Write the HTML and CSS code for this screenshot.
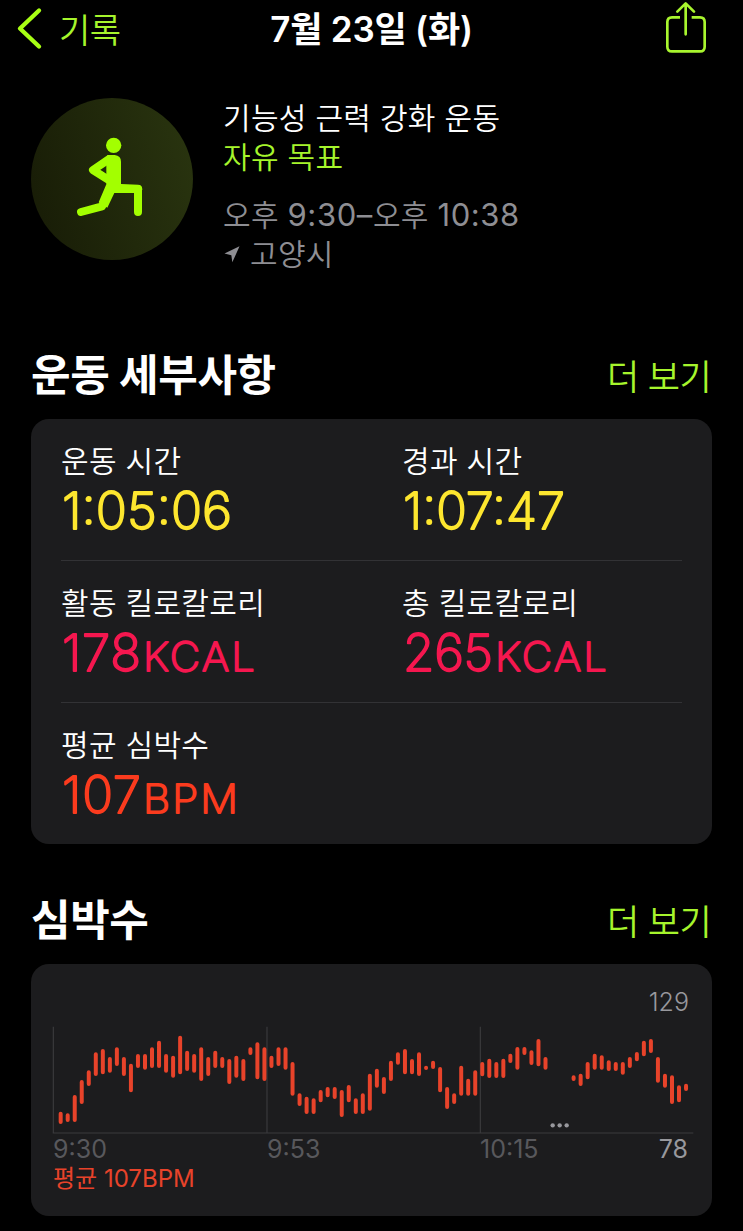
FILE: index.html
```html
<!DOCTYPE html>
<html lang="ko">
<head>
  <meta charset="UTF-8" />
  <meta name="viewport" content="width=device-width, initial-scale=1" />
  <title>7월 23일 (화)</title>
  <link rel="stylesheet" href="styles.css">
</head>
<body>
  <header class="navbar">
    <a class="back">
      <svg class="back-icon" viewBox="48 20 84 134">
        <path d="M117 33L60 87L117 141" />
      </svg>
      <span>기록</span>
    </a>
    <h1 class="navbar-title">7월 23일 (화)</h1>
    <svg class="share-icon" viewBox="879 0 132 165">
      <path d="M927 52H903Q889 52 889 66V140Q889 154 903 154H987Q1001 154 1001 140V66Q1001 52 987 52H962" />
      <path d="M944 103V11M919 35L944 10L969 35" />
    </svg>
  </header>

  <section class="summary">
    <div class="badge">
      <svg class="badge-icon" viewBox="33 39 486 486">
        <circle cx="281" cy="181" r="23" />
        <path class="torso" d="M262 210H284Q303 212 303 230V297L355 300Q367 302 367 314L355 324H283L262 368L236 352L259 298V240Z" />
        <path class="limb" d="M266 223L219 255L268 286M276 311H354V381M272 304L246 364L183 381" />
      </svg>
    </div>
    <div class="summary-text">
      <div class="workout-name">기능성 근력 강화 운동</div>
      <div class="workout-goal">자유 목표</div>
      <div class="workout-time">오후 <span class="clock">9:30–</span>오후 <span class="clock">10:38</span></div>
      <div class="workout-place">
        <svg class="place-icon" viewBox="0 0 48 52"><path d="M47 1L25 50L22 28L1 23Z" /></svg>
        <span>고양시</span>
      </div>
    </div>
  </section>

  <section class="section details">
    <div class="section-header">
      <h2>운동 세부사항</h2>
      <a class="more">더 보기</a>
    </div>
    <div class="card">
      <div class="row">
        <div class="metric time">
          <div class="label">운동 시간</div>
          <svg class="value"><text x="1" y="46" textLength="170" lengthAdjust="spacingAndGlyphs">1:05:06</text></svg>
        </div>
        <div class="metric time">
          <div class="label">경과 시간</div>
          <svg class="value"><text x="1" y="46" textLength="162" lengthAdjust="spacingAndGlyphs">1:07:47</text></svg>
        </div>
      </div>
      <div class="row">
        <div class="metric energy">
          <div class="label">활동 킬로칼로리</div>
          <svg class="value"><text x="1" y="46" textLength="79">178</text><text class="unit" x="82" y="46" textLength="114" lengthAdjust="spacingAndGlyphs">KCAL</text></svg>
        </div>
        <div class="metric energy">
          <div class="label">총 킬로칼로리</div>
          <svg class="value"><text x="1" y="46" textLength="90">265</text><text class="unit" x="93" y="46" textLength="114" lengthAdjust="spacingAndGlyphs">KCAL</text></svg>
        </div>
      </div>
      <div class="row">
        <div class="metric heart">
          <div class="label">평균 심박수</div>
          <svg class="value"><text x="1" y="46" textLength="79">107</text><text class="unit" x="82" y="46" textLength="97" lengthAdjust="spacingAndGlyphs">BPM</text></svg>
        </div>
      </div>
    </div>
  </section>

  <section class="section heart-rate">
    <div class="section-header">
      <h2>심박수</h2>
      <a class="more">더 보기</a>
    </div>
    <div class="card chart-card">
      <div class="max">129</div>
      <svg class="chart" viewBox="36 18 1926 324">
        <path class="grid" d="M40 20V339M681 20V339M1321 20V339M38 339H1960" />
        <path class="bars" id="bars" />
        <g class="dots">
          <circle cx="1538" cy="316" r="6.5" />
          <circle cx="1559" cy="316" r="6.5" />
          <circle cx="1580" cy="316" r="6.5" />
        </g>
      </svg>
      <div class="axis">
        <span>9:30</span>
        <span>9:53</span>
        <span>10:15</span>
        <span class="min">78</span>
      </div>
      <div class="average">평균 107BPM</div>
    </div>
  </section>

  <script>
    // [top, bottom] of each heart rate range, null where nothing was recorded
    var ranges = [
      [275,312],[280,306],[225,306],[180,252],[151,198],[97,168],[87,163],[111,158],[82,138],[111,168],
      [131,217],[102,144],[102,149],[82,144],[62,144],[102,158],[107,173],[47,163],[92,153],[102,158],
      [82,183],[111,168],[92,144],[111,144],[117,192],[107,173],[117,183],[82,105],[67,178],[82,183],
      [107,144],[82,138],[82,149],[126,227],[220,258],[230,282],[235,282],[210,247],[201,232],[201,237],
      [210,291],[195,247],[235,282],[220,282],[161,272],[146,203],[171,222],[122,183],[97,134],[87,163],
      [117,163],[97,168],[137,150],[122,147],[141,217],[201,267],[220,252],[137,227],[176,227],[151,227],
      [126,169],[116,174],[126,174],[116,174],[101,129],[81,149],[81,105],[91,135],[57,139],[111,149],
      null,null,null,
      [166,183],[161,198],[126,178],[101,149],[106,149],[121,153],[126,153],[126,164],[111,144],[96,124],
      [62,109],[57,99],[111,188],[161,203],[166,252],[196,247],[191,213]
    ];
    var d = '';
    ranges.forEach(function(r, i) {
      if (r) {
        d += 'M' + (62 + i * 21.08).toFixed(1) + ' ' + (r[0] + 6) + 'V' + (r[1] - 6);
      }
    });
    document.getElementById('bars').setAttribute('d', d);
  </script>
</body>
</html>
```
FILE: styles.css
```css
* {
  box-sizing: border-box;
}

body {
  margin: 0;
  height: 1231px;
  overflow: hidden;
  background: #000;
  color: #fff;
  font-family: Inter, "Noto Sans CJK KR", sans-serif;
  font-weight: 350;
}

h1, h2 {
  margin: 0;
}

/* Navigation bar */
.navbar {
  display: grid;
  grid-template-columns: 1fr auto 1fr;
  align-items: start;
  height: 98px;
  padding: 0 35px 0 16px;
}

.back {
  display: flex;
  align-items: center;
  gap: 15px;
  height: 57px;
  color: #a6f52c;
  font-size: 34px;
  letter-spacing: -0.5px;
}

.back-icon {
  width: 28px;
  height: 45px;
  fill: none;
  stroke: #a8ff14;
  stroke-width: 13;
  stroke-linecap: round;
  stroke-linejoin: round;
}

.navbar-title {
  line-height: 58px;
  font-size: 35px;
  font-weight: 600;
  letter-spacing: -0.2px;
  padding-left: 19px;
}

.share-icon {
  justify-self: end;
  width: 44px;
  height: 55px;
  fill: none;
  stroke: #a8f52e;
  stroke-width: 8;
  stroke-linecap: round;
  stroke-linejoin: round;
}

.share-icon path:first-child {
  stroke-linecap: butt;
}

/* Workout summary */
.summary {
  display: flex;
  gap: 30px;
  height: 234px;
  padding-left: 31px;
}

.badge {
  width: 162px;
  height: 162px;
  border-radius: 50%;
  background: linear-gradient(75deg, #171b06, #29340f 95%);
}

.badge-icon {
  display: block;
  width: 162px;
  height: 162px;
  fill: #a3ff00;
}

.badge-icon .limb {
  fill: none;
  stroke: #a3ff00;
  stroke-width: 24;
  stroke-linecap: round;
  stroke-linejoin: round;
}

.summary-text {
  padding-top: 1px;
  font-size: 30px;
  line-height: 39px;
  letter-spacing: 0.3px;
  white-space: nowrap;
}

.workout-goal {
  color: #a6f52c;
}

.workout-time {
  margin-top: 18px;
  color: #8e8e93;
}

.clock {
  font-size: 31px;
  font-weight: 400;
  letter-spacing: 0.6px;
}

.workout-place {
  display: flex;
  align-items: center;
  gap: 10px;
  color: #8e8e93;
}

.place-icon {
  width: 16px;
  height: 17px;
  margin-left: 1px;
  fill: #8e8e93;
}

/* Sections */
.section {
  padding: 0 31px;
}

.section-header {
  display: flex;
  justify-content: space-between;
  align-items: center;
  height: 87px;
  padding-bottom: 7px;
}

.heart-rate .section-header {
  height: 120px;
  padding-top: 32px;
}

.section-header h2 {
  font-size: 43px;
  font-weight: 700;
  letter-spacing: -0.4px;
}

.more {
  padding-top: 5px;
  padding-right: 1px;
  color: #a6f52c;
  font-size: 35px;
  letter-spacing: -0.6px;
}

.card {
  height: 425px;
  padding: 0 30px;
  border-radius: 18px;
  background: #1c1c1e;
}

.row {
  display: grid;
  grid-template-columns: 341px 1fr;
  height: 142px;
  padding-top: 23px;
  border-bottom: 1px solid #323235;
}

.row:last-child {
  border-bottom: none;
}

.label {
  height: 38px;
  line-height: 38px;
  font-size: 30px;
  letter-spacing: 0.3px;
}

.value {
  display: block;
  width: 100%;
  height: 60px;
  margin-top: 3px;
  overflow: visible;
  font-size: 51px;
  font-weight: 200;
  fill: currentColor;
  stroke: currentColor;
  stroke-width: 2px;
  stroke-linejoin: round;
}

.unit {
  font-size: 40px;
  letter-spacing: 2px;
  stroke-width: 1.8px;
}

.time .value {
  color: #fde62f;
}

.energy .value {
  color: #f5174f;
}

.heart .value {
  color: #fb3b1e;
}

/* Heart rate chart */
.chart-card {
  height: 252px;
  padding: 22px 18px 0 21px;
}

.max {
  height: 40px;
  padding-right: 5px;
  line-height: 33px;
  text-align: right;
  color: #98989d;
  font-size: 25px;
}

.chart {
  display: block;
  width: 642px;
  height: 108px;
}

.grid {
  fill: none;
  stroke: #3a3a3d;
  stroke-width: 3.5;
}

.bars {
  fill: none;
  stroke: #e8432a;
  stroke-width: 12;
  stroke-linecap: round;
}

.dots {
  fill: #98989d;
}

.axis {
  display: grid;
  grid-template-columns: 214px 213px 1fr auto;
  height: 29px;
  padding: 0 6px 0 1px;
  line-height: 30px;
  color: #58585c;
  font-size: 25px;
  font-weight: 400;
}

.axis .min {
  color: #98989d;
}

.average {
  padding-left: 1px;
  line-height: 32px;
  color: #e8432a;
  font-size: 24px;
  font-weight: 400;
}
```
